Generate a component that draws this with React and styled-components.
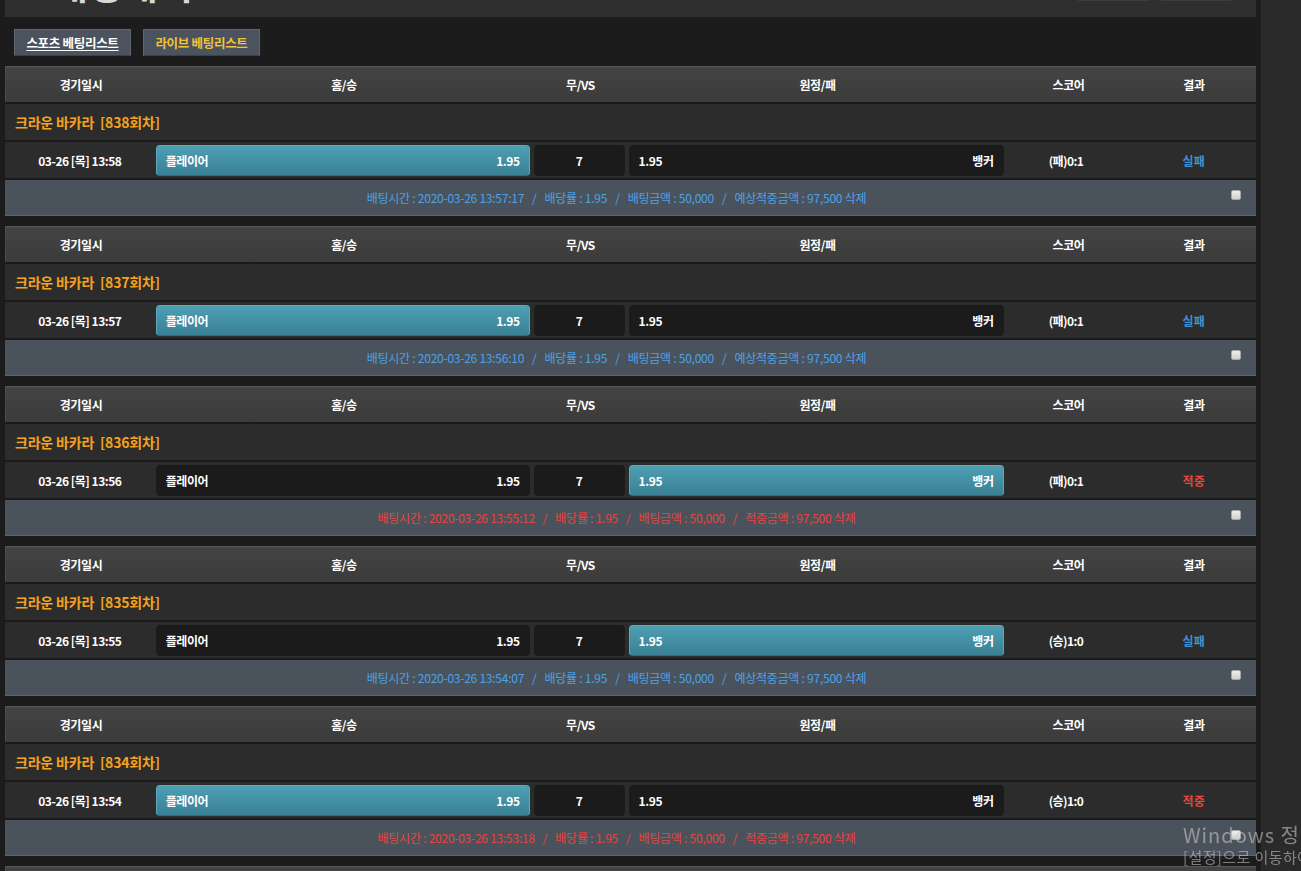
import React from 'react';
import styled, { createGlobalStyle } from 'styled-components';

const GlobalStyle = createGlobalStyle`
  html, body {
    margin: 0;
    padding: 0;
    background: #1c1c1c;
    overflow: hidden;
  }
  body {
    font-family: "Noto Sans CJK KR", "Noto Sans", sans-serif;
    color: #fff;
  }
`;

const Page = styled.div`
  display: flex;
  min-height: 871px;
`;

const Main = styled.div`
  width: 1251px;
  padding-left: 5px;
`;

const SideStrip = styled.div`
  flex: 1;
  margin-left: 5px;
  background: #2a2a2a;
`;

const TopPanel = styled.div`
  height: 60px;
  margin-top: -43px;
  background: #2f2f2f;
  display: flex;
  align-items: flex-end;
  justify-content: space-between;
  overflow: hidden;
`;

const BigTitle = styled.div`
  font-size: 38px;
  font-weight: 700;
  color: #d8d8d8;
  line-height: 1;
  margin: 0 0 15px 48px;
`;

const TopButtons = styled.div`
  display: flex;
  gap: 9px;
  margin: 0 23px 16px 0;
`;

const TopButton = styled.div`
  width: 72px;
  height: 26px;
  background: #141414;
  border: 1px solid #3c3c3c;
  border-radius: 2px;
`;

const Tabs = styled.div`
  display: flex;
  gap: 12px;
  padding: 12px 0 10px 9px;
`;

const Tab = styled.div`
  width: 117px;
  height: 27px;
  box-sizing: border-box;
  background: #4b535e;
  border: 1px solid #5e6671;
  border-bottom-color: #3a4048;
  display: flex;
  align-items: center;
  justify-content: center;
  font-size: 12.5px;
  font-weight: 700;
  color: ${(p) => (p.$active ? '#ffffff' : '#f2c237')};
  text-decoration: ${(p) => (p.$active ? 'underline' : 'none')};
  text-underline-offset: 2px;
  letter-spacing: -0.3px;
`;

const Card = styled.div`
  width: 1251px;
  margin-bottom: 10px;
`;

const HeadRow = styled.div`
  display: grid;
  grid-template-columns: 150px 376px 97px 377px 125px 126px;
  height: 36px;
  box-sizing: border-box;
  border-top: 1px solid #585858;
  border-left: 1px solid #4a4a4a;
  background: linear-gradient(#444444, #3b3b3b);
  font-size: 12px;
  font-weight: 700;
  align-items: center;
  text-align: center;
  letter-spacing: -0.4px;
`;

const Row = styled.div`
  height: 38px;
  box-sizing: border-box;
  border-top: 2px solid #1a1a1a;
  background: #2c2c2c;
  display: flex;
  align-items: center;
`;

const GameTitle = styled.div`
  padding-left: 10px;
  font-size: 14px;
  font-weight: 700;
  color: #f5a21c;
  letter-spacing: -0.2px;
  white-space: pre;
`;

const DateCell = styled.div`
  width: 150px;
  text-align: center;
  font-size: 12px;
  font-weight: 700;
  letter-spacing: -0.5px;
`;

const BetBox = styled.div`
  height: 31px;
  margin-top: 1px;
  box-sizing: border-box;
  width: ${(p) => p.$w}px;
  margin-left: ${(p) => p.$ml}px;
  border-radius: 4px;
  display: flex;
  align-items: center;
  justify-content: ${(p) => (p.$center ? 'center' : 'space-between')};
  padding: 0 9px;
  font-size: 12px;
  font-weight: 700;
  letter-spacing: -0.4px;
  background: ${(p) => (p.$picked ? 'linear-gradient(#4e9fb3, #3a8095)' : '#1b1b1b')};
  border: 1px solid ${(p) => (p.$picked ? '#5aaabd' : '#1b1b1b')};
  border-bottom-color: ${(p) => (p.$picked ? '#2f6f80' : '#1b1b1b')};
`;

const ScoreCell = styled.div`
  width: 125px;
  text-align: center;
  font-size: 12px;
  font-weight: 700;
  letter-spacing: -0.6px;
  padding-right: 3px;
`;

const ResultCell = styled.div`
  width: 125px;
  text-align: center;
  font-size: 12px;
  font-weight: 700;
  color: ${(p) => (p.$win ? '#e8453c' : '#3f93d8')};
`;

const InfoRow = styled.div`
  position: relative;
  height: 38px;
  box-sizing: border-box;
  border-top: 2px solid #1a1a1a;
  border-bottom: 1px solid #5c646e;
  background: #4a525c;
  display: flex;
  align-items: center;
  justify-content: center;
  padding-right: 28px;
  font-size: 12px;
  letter-spacing: -0.25px;
  color: ${(p) => (p.$win ? '#e8453c' : '#4ea2e6')};
`;

const Sep = styled.span`
  margin: 0 8px;
`;

const Check = styled.input`
  appearance: none;
  position: absolute;
  right: 15px;
  top: 10px;
  width: 10px;
  height: 10px;
  margin: 0;
  border-radius: 2px;
  background: linear-gradient(#f0f0f0, #cfcfcf);
  border: 1px solid #a9a9a9;
  box-sizing: border-box;
`;

const Watermark = styled.div`
  position: fixed;
  left: 1183px;
  top: 822px;
  color: rgba(210, 210, 210, 0.55);
  white-space: nowrap;
  pointer-events: none;
  font-family: "Noto Sans CJK KR", "Noto Sans", sans-serif;
`;

const WmLine1 = styled.div`
  font-size: 20px;
  line-height: 25px;
  letter-spacing: 1px;
`;

const WmLine2 = styled.div`
  font-size: 15px;
  line-height: 20px;
  letter-spacing: 0.4px;
`;

const bets = [
  { no: 838, time: '13:58', pick: 'home', score: '(패)0:1', win: false, at: '13:57:17' },
  { no: 837, time: '13:57', pick: 'home', score: '(패)0:1', win: false, at: '13:56:10' },
  { no: 836, time: '13:56', pick: 'away', score: '(패)0:1', win: true, at: '13:55:12' },
  { no: 835, time: '13:55', pick: 'away', score: '(승)1:0', win: false, at: '13:54:07' },
  { no: 834, time: '13:54', pick: 'home', score: '(승)1:0', win: true, at: '13:53:18' },
  { no: 833, time: '13:53', pick: 'home', score: '(승)1:0', win: true, at: '13:52:20' },
];

const BetCard = ({ bet }) => (
  <Card>
    <HeadRow>
      <div>경기일시</div>
      <div>홈/승</div>
      <div>무/VS</div>
      <div>원정/패</div>
      <div>스코어</div>
      <div>결과</div>
    </HeadRow>
    <Row>
      <GameTitle>{`크라운 바카라  [${bet.no}회차]`}</GameTitle>
    </Row>
    <Row>
      <DateCell>03-26 [목] {bet.time}</DateCell>
      <BetBox $w={375} $ml={1} $picked={bet.pick === 'home'}>
        <span>플레이어</span>
        <span>1.95</span>
      </BetBox>
      <BetBox $w={91} $ml={4} $center>
        7
      </BetBox>
      <BetBox $w={376} $ml={4} $picked={bet.pick === 'away'}>
        <span>1.95</span>
        <span>뱅커</span>
      </BetBox>
      <ScoreCell>{bet.score}</ScoreCell>
      <ResultCell $win={bet.win}>{bet.win ? '적중' : '실패'}</ResultCell>
    </Row>
    <InfoRow $win={bet.win}>
      배팅시간 : 2020-03-26 {bet.at}
      <Sep>/</Sep>
      배당률 : 1.95
      <Sep>/</Sep>
      배팅금액 : 50,000
      <Sep>/</Sep>
      {bet.win ? '적중금액' : '예상적중금액'} : 97,500 삭제
      <Check type="checkbox" />
    </InfoRow>
  </Card>
);

export default function App() {
  return (
    <>
      <GlobalStyle />
      <Page>
        <Main>
          <TopPanel>
            <BigTitle>배팅내역</BigTitle>
            <TopButtons>
              <TopButton />
              <TopButton />
            </TopButtons>
          </TopPanel>
          <Tabs>
            <Tab $active>스포츠 베팅리스트</Tab>
            <Tab>라이브 베팅리스트</Tab>
          </Tabs>
          {bets.map((b) => (
            <BetCard key={b.no} bet={b} />
          ))}
        </Main>
        <SideStrip />
      </Page>
      <Watermark>
        <WmLine1>Windows 정품 인증</WmLine1>
        <WmLine2>[설정]으로 이동하여 Windows를 정품 인증합니다.</WmLine2>
      </Watermark>
    </>
  );
}
